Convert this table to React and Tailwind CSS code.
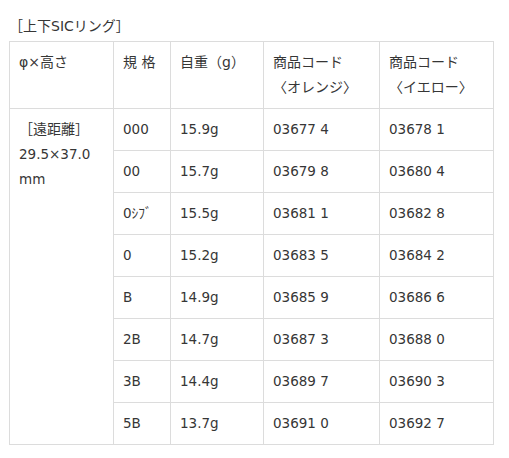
import React from 'react';

const rows = [
    { size: '000', weight: '15.9g', orange: '03677 4', yellow: '03678 1' },
    { size: '00', weight: '15.7g', orange: '03679 8', yellow: '03680 4' },
    { size: '0ｼﾌﾞ', weight: '15.5g', orange: '03681 1', yellow: '03682 8' },
    { size: '0', weight: '15.2g', orange: '03683 5', yellow: '03684 2' },
    { size: 'B', weight: '14.9g', orange: '03685 9', yellow: '03686 6' },
    { size: '2B', weight: '14.7g', orange: '03687 3', yellow: '03688 0' },
    { size: '3B', weight: '14.4g', orange: '03689 7', yellow: '03690 3' },
    { size: '5B', weight: '13.7g', orange: '03691 0', yellow: '03692 7' },
];

const cell = 'border border-[#dcdcdc] px-[9px] py-[8px] align-top text-left font-normal';

const App = () => {
    return (
        <div className="min-h-screen bg-white text-[#363636] text-[13.5px] leading-[25px] font-['DejaVu_Sans','Noto_Sans_CJK_JP',sans-serif] px-[9px]">
            <div className="pt-[14px] mb-[2px] text-[14px]">［上下SICリング］</div>
            <table className="border-collapse w-[484px] table-fixed">
                <thead>
                    <tr>
                        <th className={`${cell} w-[104px] text-[14px]`}>φ×高さ</th>
                        <th className={`${cell} w-[57px] text-[14px]`}>規 格</th>
                        <th className={`${cell} w-[93px] text-[14px]`}>自重（g）</th>
                        <th className={`${cell} w-[116px] text-[14px]`}>
                            商品コード
                            <br />
                            〈オレンジ〉
                        </th>
                        <th className={`${cell} w-[114px] text-[14px]`}>
                            商品コード
                            <br />
                            〈イエロー〉
                        </th>
                    </tr>
                </thead>
                <tbody>
                    {rows.map((row, i) => (
                        <tr key={row.orange}>
                            {i === 0 && (
                                <td className={cell} rowSpan={rows.length}>
                                    <span className="text-[14px]">［遠距離］</span>
                                    <br />
                                    29.5×37.0
                                    <br />
                                    mm
                                </td>
                            )}
                            <td className={cell}>{row.size}</td>
                            <td className={cell}>{row.weight}</td>
                            <td className={cell}>{row.orange}</td>
                            <td className={cell}>{row.yellow}</td>
                        </tr>
                    ))}
                </tbody>
            </table>
        </div>
    );
};

export default App;
